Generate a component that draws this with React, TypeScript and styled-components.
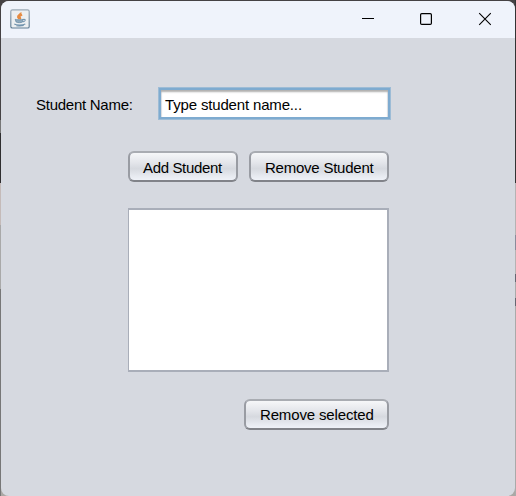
import React from "react";
import styled, { createGlobalStyle } from "styled-components";

const GlobalStyle = createGlobalStyle`
  *, *::before, *::after { box-sizing: border-box; }
  html, body { margin: 0; padding: 0; overflow: hidden; }
  body, button, input { font-family: "Liberation Sans", Arial, sans-serif; }
`;

const Desktop = styled.div`
  width: 516px;
  height: 496px;
  padding: 1px 1px 0;
  background:
    linear-gradient(#777 0 13px, #2f2e2f 13px 63px, #c5bbb9 63px 105px, #a9a9a9 105px 169px, #777 169px) 0 120px / 1px 376px no-repeat,
    linear-gradient(#333 0 183px, #b5b2b3 183px 235px, #8b8b9a 235px 250px, #b5b2b3 250px 274px, #666671 274px 282px, #aaa 282px 298px, #666671 298px 306px, #aaa 306px) 100% 0 / 1px 496px no-repeat,
    linear-gradient(#454244 0 120px, #aaa8a5 120px);
`;

const Window = styled.main`
  display: flex;
  flex-direction: column;
  height: 495px;
  overflow: hidden;
  border-radius: 8px;
  background: #d6d9e0;
`;

const TitleBar = styled.header`
  display: flex;
  align-items: center;
  justify-content: space-between;
  flex: none;
  height: 37px;
  padding: 0 0 1px 9px;
  background: #eff3fb;
`;

const AppIcon = styled.svg`
  display: block;
  width: 20px;
  height: 20px;
`;

const WindowControls = styled.div`
  display: flex;
  height: 36px;
  margin-right: 1px;
`;

const ControlButton = styled.button`
  display: grid;
  place-items: center;
  width: 58.5px;
  padding: 0;
  border: 0;
  background: transparent;
  svg { display: block; width: 14px; height: 14px; }
`;

const Form = styled.section`
  display: flex;
  flex-direction: column;
  width: 390px;
  padding-top: 49px;
`;

const FieldRow = styled.div`
  display: flex;
  align-items: center;
  height: 33px;
  padding-left: 35px;
`;

const Label = styled.label`
  width: 122px;
  padding-top: 2px;
  font-size: 15px;
  letter-spacing: -0.26px;
  line-height: 18px;
  white-space: nowrap;
  color: #000;
`;

const NameInput = styled.input`
  width: 233px;
  height: 33px;
  padding: 1px 4px 0;
  border: 1px solid #9dbcd6;
  border-radius: 0;
  outline: 2px solid #7eabd0;
  outline-offset: -3px;
  background: #fff;
  box-shadow: inset 0 4px 2px #b0afae, inset 3px 0 1px #d8dbe0, inset -3px 0 1px #d8dbe0;
  font-size: 15px;
  letter-spacing: -0.16px;
  text-indent: 2px;
  line-height: 18px;
  color: #000;
`;

const ButtonRow = styled.div<{ $gap: number }>`
  display: flex;
  justify-content: flex-end;
  gap: 11px;
  margin-top: ${({ $gap }) => $gap}px;
  padding-right: 2px;
`;

const PushButton = styled.button<{ $width: number; $indent?: number; $spacing?: number; $drop?: number }>`
  display: flex;
  align-items: center;
  width: ${({ $width }) => $width}px;
  height: 31px;
  padding: ${({ $drop = 2 }) => $drop}px 0 0 ${({ $indent = 14 }) => $indent}px;
  border: 2px solid;
  border-color: #a9acb2 #999ca3 #818389 #999ca3;
  border-radius: 6px;
  background: linear-gradient(#f6f7f9 0%, #e4e6eb 35%, #d6d9df 58%, #e7eaf0 85%, #eff2f8 100%) padding-box;
  font-size: 15px;
  letter-spacing: ${({ $spacing = -0.2 }) => $spacing}px;
  line-height: 18px;
  white-space: nowrap;
  color: #000;
`;

const StudentList = styled.div`
  width: 261px;
  height: 164px;
  margin: 26px 0 0 127px;
  border: solid #a9aeb9;
  border-width: 2px 2px 2px 1px;
  background: #fff;
`;

function JavaIcon() {
  return (
    <AppIcon viewBox="0 0 20 20" aria-hidden="true">
      <defs>
        <linearGradient id="iconFrame" x1="0" y1="0" x2="0" y2="1">
          <stop offset="0" stopColor="#9caab6" />
          <stop offset="1" stopColor="#617e95" />
        </linearGradient>
      </defs>
      <rect x=".8" y=".8" width="18.4" height="18.2" rx="1.6" fill="#eceff1" stroke="url(#iconFrame)" strokeWidth="1.2" />
      <path d="M10.8 3.4c.5 1.8-3.6 2.7-2.9 4.7.3.9 1.3 1.3 1.7 2M12.1 5.6c-2.2 1.1-3.1 1.7-2 3 .6.7.3 1.2-.1 1.6" fill="none" stroke="#e68b42" strokeWidth="1.8" />
      <path d="M5.2 10.3c1.5.7 6.1.7 7.9 0l-.6 2.7c-1.5.9-4.8.9-6.4 0z" fill="#8faabd" stroke="#698ba5" strokeWidth=".8" />
      <path d="M13 10.5c3.3-.7 2.8 1.9-.2 2.4M4.3 15c1.9 1.3 8.4 1.4 11 0M6.3 16.6c2.5.5 5.4.4 7.5-.1" fill="none" stroke="#7193ad" strokeWidth="1.1" />
    </AppIcon>
  );
}

export default function App() {
  return (
    <>
      <GlobalStyle />
      <Desktop>
        <Window>
          <TitleBar>
            <JavaIcon />
            <WindowControls>
              <ControlButton aria-label="Minimize">
                <svg viewBox="0 0 14 14"><path d="M1 6.5h12" stroke="#000" /></svg>
              </ControlButton>
              <ControlButton aria-label="Maximize">
                <svg viewBox="0 0 14 14"><rect x="1.6" y="1.6" width="10.8" height="10.8" rx="1.2" fill="none" stroke="#000" strokeWidth="1.2" /></svg>
              </ControlButton>
              <ControlButton aria-label="Close">
                <svg viewBox="0 0 14 14"><path d="m1.2 1.2 11.6 11.6m0-11.6L1.2 12.8" fill="none" stroke="#000" strokeWidth="1.1" /></svg>
              </ControlButton>
            </WindowControls>
          </TitleBar>
          <Form>
            <FieldRow>
              <Label htmlFor="studentName">Student Name:</Label>
              <NameInput id="studentName" defaultValue="Type student name..." spellCheck={false} />
            </FieldRow>
            <ButtonRow $gap={31}>
              <PushButton $width={110} $indent={13} $spacing={-0.35}>Add Student</PushButton>
              <PushButton $width={140} $spacing={-0.23}>Remove Student</PushButton>
            </ButtonRow>
            <StudentList role="listbox" aria-label="Students" />
            <ButtonRow $gap={27}>
              <PushButton $width={145} $spacing={-0.15} $drop={0}>Remove selected</PushButton>
            </ButtonRow>
          </Form>
        </Window>
      </Desktop>
    </>
  );
}
